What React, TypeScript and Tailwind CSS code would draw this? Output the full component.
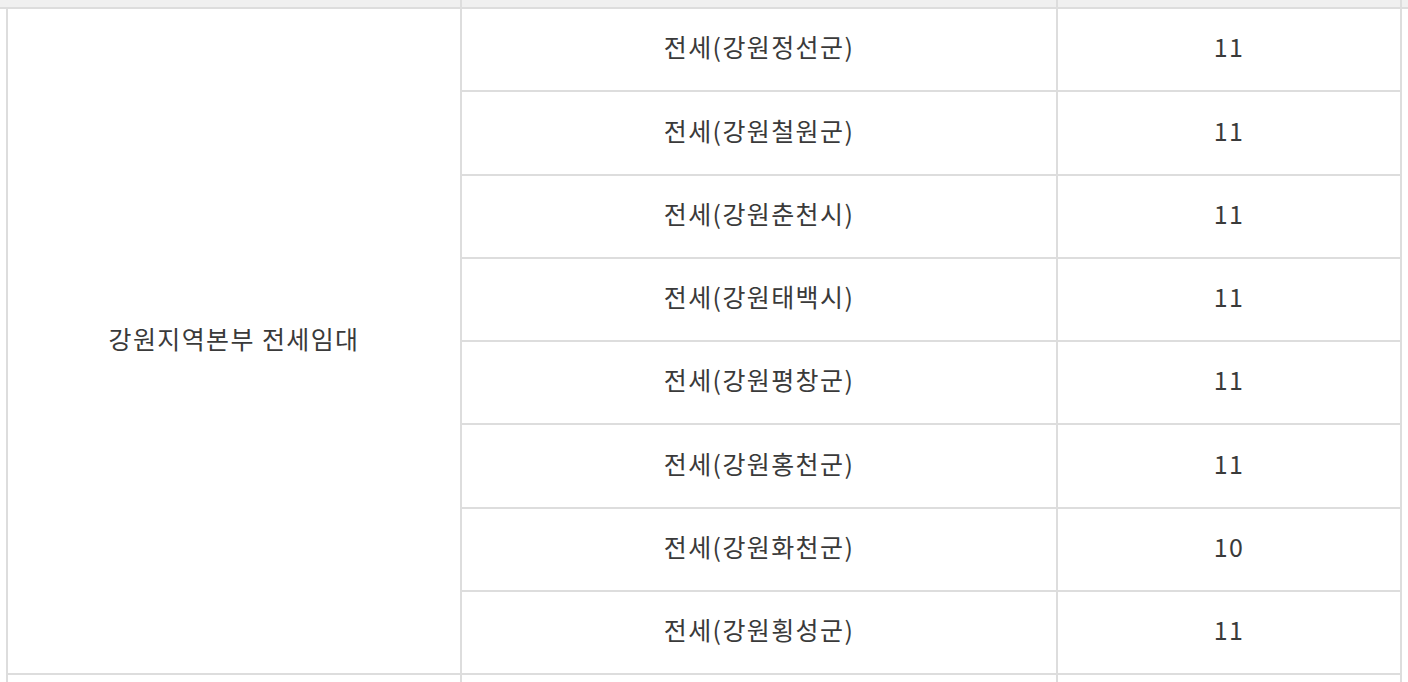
const rows: { name: string; count: number }[] = [
  { name: "전세(강원정선군)", count: 11 },
  { name: "전세(강원철원군)", count: 11 },
  { name: "전세(강원춘천시)", count: 11 },
  { name: "전세(강원태백시)", count: 11 },
  { name: "전세(강원평창군)", count: 11 },
  { name: "전세(강원홍천군)", count: 11 },
  { name: "전세(강원화천군)", count: 10 },
  { name: "전세(강원횡성군)", count: 11 },
];

export default function App() {
  return (
    <div className="w-[1408px] h-[682px] overflow-hidden bg-white text-[25px] tracking-[1.4px] text-[#3a3a3a] font-['Noto_Sans_CJK_KR','Noto_Sans',sans-serif]">
      {/* header strip, mostly scrolled off */}
      <div className="flex h-[9px] bg-[#f0f0f0] border-b-2 border-[#dddddd]">
        <div className="w-[462px] border-r-2 border-[#dddddd]" />
        <div className="w-[596px] border-r-2 border-[#dddddd]" />
        <div className="w-[344px] border-r-2 border-[#dddddd]" />
      </div>

      <div className="flex ml-[6px] border-l-2 border-[#dddddd]">
        <div className="w-[454px] flex items-center justify-center pb-[5px] border-r-2 border-b-2 border-[#dddddd]">
          강원지역본부 전세임대
        </div>
        <div className="flex flex-col">
          {rows.map((row) => (
            <div key={row.name} className="flex h-[83.25px] border-b-2 border-[#dddddd]">
              <div className="w-[596px] flex items-center justify-center pb-[5px] border-r-2 border-[#dddddd]">
                {row.name}
              </div>
              <div className="w-[344px] flex items-center justify-center pb-[5px] border-r-2 border-[#dddddd]">
                {row.count}
              </div>
            </div>
          ))}
        </div>
      </div>

      {/* next group starts below */}
      <div className="flex ml-[6px] h-[20px] border-l-2 border-[#dddddd]">
        <div className="w-[454px] border-r-2 border-[#dddddd]" />
        <div className="w-[596px] border-r-2 border-[#dddddd]" />
        <div className="w-[344px] border-r-2 border-[#dddddd]" />
      </div>
    </div>
  );
}
